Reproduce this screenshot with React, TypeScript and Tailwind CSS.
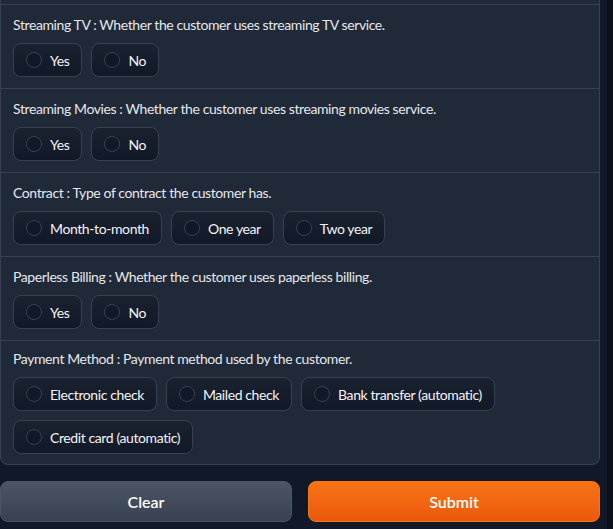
import React, { useState } from 'react';

type Field = {
  name: string;
  description: string;
  options: string[];
};

const fields: Field[] = [
  { name: 'Streaming TV', description: 'Whether the customer uses streaming TV service.', options: ['Yes', 'No'] },
  { name: 'Streaming Movies', description: 'Whether the customer uses streaming movies service.', options: ['Yes', 'No'] },
  { name: 'Contract', description: 'Type of contract the customer has.', options: ['Month-to-month', 'One year', 'Two year'] },
  { name: 'Paperless Billing', description: 'Whether the customer uses paperless billing.', options: ['Yes', 'No'] },
  {
    name: 'Payment Method',
    description: 'Payment method used by the customer.',
    options: ['Electronic check', 'Mailed check', 'Bank transfer (automatic)', 'Credit card (automatic)'],
  },
];

const RadioGroup: React.FC<{
  field: Field;
  value?: string;
  last?: boolean;
  onChange: (v: string) => void;
}> = ({ field, value, last, onChange }) => (
  <div className={`border-t border-[#374151] px-3 ${last ? 'pt-2 pb-[10px]' : 'pt-[10px] pb-[11px]'}`}>
    <div className="text-[14px] leading-5 text-[#e5e7eb] mb-2 tracking-[-0.4px]">
      {field.name} : {field.description}
    </div>
    <div className="flex flex-wrap gap-x-[9px] gap-y-[9px]">
      {field.options.map((opt) => (
        <label
          key={opt}
          onClick={() => onChange(opt)}
          className="flex items-center gap-2 h-[34px] pl-[12px] pr-[12px] rounded-lg border border-[#374151] bg-gradient-to-b from-[#1a2230] to-[#111827] cursor-pointer"
        >
          <span
            className={`w-4 h-4 rounded-full border border-[#374151] ${
              value === opt ? 'bg-[#f97316]' : 'bg-[#111827]'
            }`}
          />
          <span className="text-[14px] text-[#f3f4f6] tracking-[-0.4px]">{opt}</span>
        </label>
      ))}
    </div>
  </div>
);

export default function App() {
  const [values, setValues] = useState<Record<string, string>>({});

  return (
    <div
      className="w-[613px] h-[529px] overflow-hidden bg-[#111827] flex"
      style={{ fontFamily: '"Source Sans Pro", Lato, "Noto Sans", sans-serif' }}
    >
      <div className="w-[600px] flex flex-col">
        <div className="rounded-b-lg border-x border-b border-[#374151] bg-[#1f2937]">
          <div className="h-1" />
          {fields.map((f, i) => (
            <RadioGroup
              key={f.name}
              field={f}
              value={values[f.name]}
              last={i === fields.length - 1}
              onChange={(v) => setValues({ ...values, [f.name]: v })}
            />
          ))}
        </div>
        <div className="flex gap-4 mt-4">
          <button
            onClick={() => setValues({})}
            className="flex-1 h-[41px] rounded-lg border border-[#4b5563] bg-gradient-to-b from-[#4b5563] to-[#374151] text-white text-[16px] font-semibold"
          >
            Clear
          </button>
          <button className="flex-1 h-[41px] rounded-lg border border-[#f97316] bg-gradient-to-b from-[#f97316] to-[#ea580c] text-white text-[16px] font-semibold">
            Submit
          </button>
        </div>
      </div>
      <div className="flex-1 ml-[7px] bg-[#0b0f19]" />
    </div>
  );
}
